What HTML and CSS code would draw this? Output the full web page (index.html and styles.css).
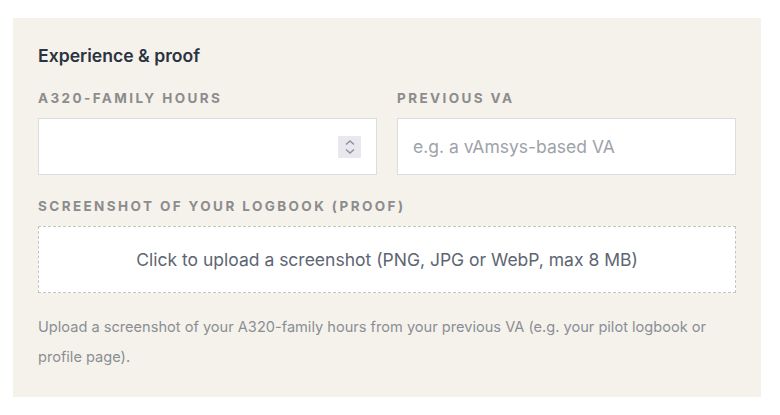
FILE: index.html
```html
<!DOCTYPE html>
<html lang="en">
<head>
<meta charset="utf-8">
<title>Experience &amp; proof</title>
<link rel="stylesheet" href="styles.css">
</head>
<body>
  <section class="panel">
    <h2 class="panel-title">Experience &amp; proof</h2>
    <div class="row">
      <div class="field">
        <label class="field-label" for="hours">A320-family hours</label>
        <div class="input number-input">
          <span class="spinner" aria-hidden="true">
            <svg width="12" height="18" viewBox="0 0 12 18"><path d="M2 6.5 L6 3 L10 6.5" fill="none" stroke="#8e9098" stroke-width="1.4"/><path d="M2 11.5 L6 15 L10 11.5" fill="none" stroke="#8e9098" stroke-width="1.4"/></svg>
          </span>
        </div>
      </div>
      <div class="field">
        <label class="field-label" for="va">Previous VA</label>
        <div class="input"><span class="placeholder">e.g. a vAmsys-based VA</span></div>
      </div>
    </div>
    <div class="field">
      <label class="field-label">Screenshot of your logbook (proof)</label>
      <div class="upload">Click to upload a screenshot (PNG, JPG or WebP, max 8 MB)</div>
    </div>
    <p class="help">Upload a screenshot of your A320-family hours from your previous VA (e.g. your pilot logbook or profile page).</p>
  </section>
</body>
</html>
```

FILE: styles.css
```css
html, body {
  margin: 0;
  padding: 0;
  background: #ffffff;
}

body {
  font-family: Inter, "Noto Sans", sans-serif;
  padding: 18px 19px 0 13px;
}

.panel {
  background: #f5f2ec;
  padding: 25px 25px 25px 25px;
  display: flex;
  flex-direction: column;
}

.panel-title {
  margin: 1px 0 20px;
  font-size: 17.6px;
  line-height: 24px;
  font-weight: 600;
  color: #2b3340;
}

.row {
  display: grid;
  grid-template-columns: 1fr 1fr;
  gap: 20px;
  margin-bottom: 21px;
}

.field {
  display: flex;
  flex-direction: column;
}

.field-label {
  font-size: 13.5px;
  line-height: 20px;
  font-weight: 700;
  letter-spacing: 2.4px;
  text-transform: uppercase;
  color: #8c8c8c;
  margin-bottom: 10px;
}

.input {
  height: 57px;
  box-sizing: border-box;
  background: #ffffff;
  border: 1px solid #dcdde0;
  display: flex;
  align-items: center;
  padding: 0 15px;
}

.number-input {
  justify-content: flex-end;
  padding-right: 15px;
}

.spinner {
  width: 23px;
  height: 22px;
  background: #e9e8ee;
  display: flex;
  align-items: center;
  justify-content: center;
}

.placeholder {
  font-size: 17.5px;
  color: #9ea2a9;
}

.upload {
  height: 67px;
  box-sizing: border-box;
  border: 1px dashed #c4c4c4;
  background: #ffffff;
  display: flex;
  align-items: center;
  justify-content: center;
  font-size: 17.5px;
  color: #5d6572;
}

.help {
  margin: 19px 0 0;
  font-size: 14.6px;
  line-height: 30px;
  color: #8a8e94;
}
```
